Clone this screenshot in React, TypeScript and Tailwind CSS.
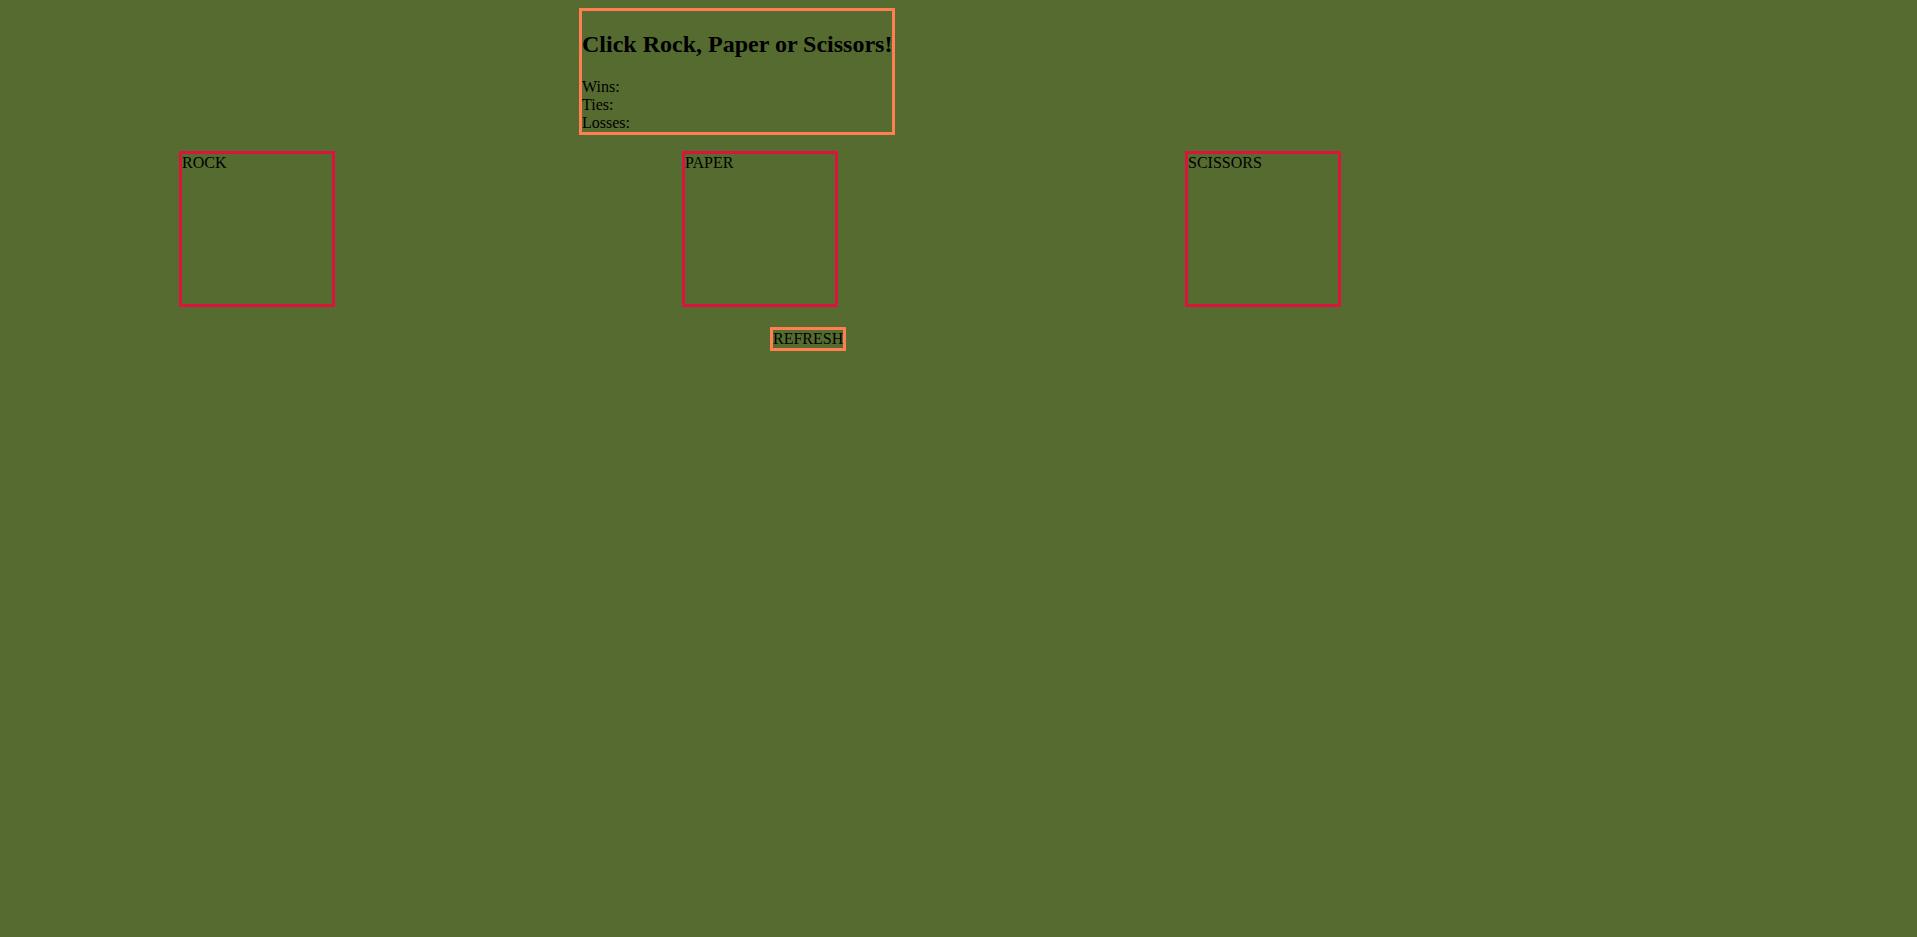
import React from "react";

const choices = ["ROCK", "PAPER", "SCISSORS"];

export default function App() {
  return (
    <div className="min-h-[937px] w-full bg-[#556b2f] pt-2 text-black font-['Liberation_Serif',serif] text-base leading-[normal]">
      <div className="ml-[579px] w-fit border-[3px] border-[#ff7f50]">
        <h2 className="my-[20px] text-2xl font-bold leading-[normal]">Click Rock, Paper or Scissors!</h2>
        <div>Wins:</div>
        <div>Ties:</div>
        <div>Losses:</div>
      </div>

      <div className="mt-4 ml-[179px] flex gap-[347px]">
        {choices.map((c) => (
          <div key={c} className="h-[156px] w-[156px] border-[3px] border-[#dc143c] cursor-pointer">
            {c}
          </div>
        ))}
      </div>

      <div className="mt-5 ml-[770px] w-fit border-[3px] border-[#ff7f50] cursor-pointer">REFRESH</div>
    </div>
  );
}
